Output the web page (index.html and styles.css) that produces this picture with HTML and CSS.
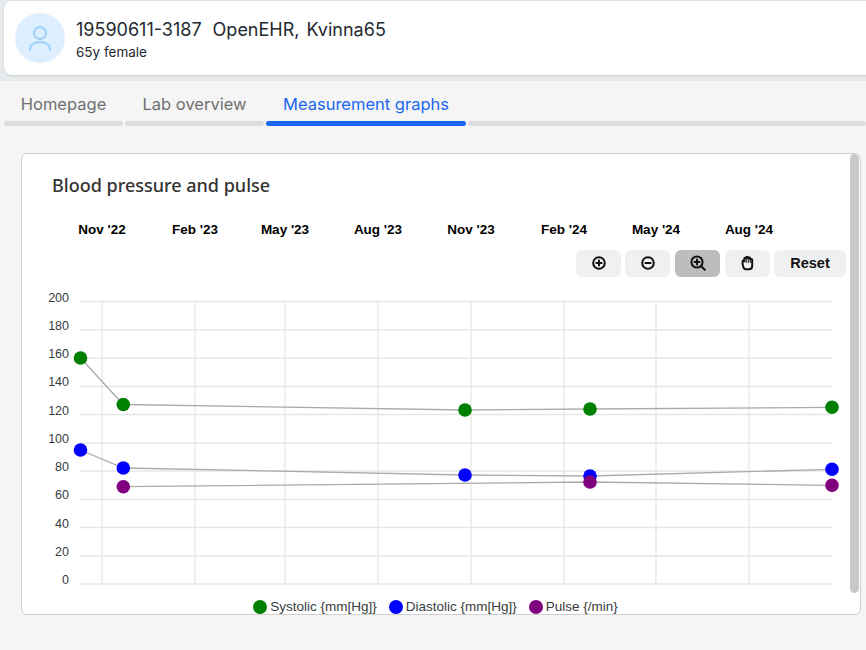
FILE: index.html
```html
<!DOCTYPE html>
<html lang="en">
<head>
    <meta charset="UTF-8">
    <meta name="viewport" content="width=device-width, initial-scale=1.0">
    <link rel="stylesheet" href="styles.css">
    <title>Measurement graphs</title>
</head>
<body>

<div class="patient-bar">
    <header class="patient">
        <div class="avatar">
            <svg width="28" height="28" viewBox="0 0 28 28" fill="none" stroke="#9fd0fa" stroke-width="2" stroke-linecap="round">
                <circle cx="14" cy="9" r="6"/>
                <path d="M4 26c0-5 4-8 10-8s10 3 10 8"/>
            </svg>
        </div>
        <div class="patient-text">
            <div class="patient-name"><span class="patient-id">19590611-3187</span><span>OpenEHR,</span><span>Kvinna65</span></div>
            <div class="patient-info">65y female</div>
        </div>
    </header>
</div>

<nav class="tabs">
    <a class="tab tab-home">Homepage</a>
    <a class="tab tab-lab">Lab overview</a>
    <a class="tab tab-graphs active">Measurement graphs</a>
    <a class="tab tab-rest"></a>
</nav>

<main class="card">
    <h2>Blood pressure and pulse</h2>
    <div class="scrollbar"></div>

    <div class="toolbar">
        <button class="tool">
            <svg width="16" height="16" viewBox="0 0 16 16" fill="none" stroke="#111" stroke-width="2" stroke-linecap="round"><circle cx="8" cy="8" r="5.800"/><path d="M8 5.400v5.200M5.400 8h5.200"/></svg>
        </button>
        <button class="tool">
            <svg width="16" height="16" viewBox="0 0 16 16" fill="none" stroke="#111" stroke-width="2" stroke-linecap="round"><circle cx="8" cy="8" r="5.800"/><path d="M5.400 8h5.200"/></svg>
        </button>
        <button class="tool tool-wide-gap active">
            <svg width="16" height="16" viewBox="0 0 16 16" fill="none" stroke="#111" stroke-width="2" stroke-linecap="round"><circle cx="7" cy="7" r="5.600"/><path d="M7 4.600v4.800M4.600 7h4.800M11.200 11.200l3.600 3.600"/></svg>
        </button>
        <button class="tool tool-wide-gap">
            <svg width="16" height="16" viewBox="0 0 16 16" fill="none" stroke="#111" stroke-linecap="round" stroke-linejoin="round"><path stroke-width="2" d="M2.600 9V6.200c0-.8 1.700-.8 1.700 0V3.400c0-1 1.900-1 1.900 0V2.600c0-1 2-1 2 0v.6c0-1 2-1 2 0v1.400c0-.9 2-.9 2 0v6.200c0 2.300-1.300 3.500-3.300 3.500H6.600c-1.800 0-2.800-.9-3.300-2.200z"/><path d="M6.200 4v3.500M8.200 3v4.500M10.200 3.500v4" stroke-width="1"/></svg>
        </button>
        <button class="tool tool-reset">Reset</button>
    </div>

    <svg class="chart" width="838" height="384" viewBox="22 208 838 384">
        <g class="grid">
            <path d="M80 301.500H832M80 330H832M80 358H832M80 386.500H832M80 414.500H832M80 443H832M80 471H832M80 499.500H832M80 527.500H832M80 556H832M80 584H832"/>
            <path d="M102 301V584M195 301V584M285 301V584M378 301V584M471 301V584M564 301V584M656 301V584M749 301V584"/>
        </g>
        <g class="months">
            <text x="102" y="234">Nov '22</text>
            <text x="195" y="234">Feb '23</text>
            <text x="285" y="234">May '23</text>
            <text x="378" y="234">Aug '23</text>
            <text x="471" y="234">Nov '23</text>
            <text x="564" y="234">Feb '24</text>
            <text x="656" y="234">May '24</text>
            <text x="749" y="234">Aug '24</text>
        </g>
        <g class="values">
            <text x="69" y="302">200</text>
            <text x="69" y="330">180</text>
            <text x="69" y="358">160</text>
            <text x="69" y="386">140</text>
            <text x="69" y="415">120</text>
            <text x="69" y="443">100</text>
            <text x="69" y="471">80</text>
            <text x="69" y="499">60</text>
            <text x="69" y="528">40</text>
            <text x="69" y="556">20</text>
            <text x="69" y="584">0</text>
        </g>
        <g class="lines">
            <polyline points="80.500,358 123.300,404.500 465,410 590,409 832,407.300"/>
            <polyline points="80.500,450 123.300,468 465,475 590,476 832,469.300"/>
            <polyline points="123.300,486.700 590,482 832,485.300"/>
        </g>
        <g fill="#008000">
            <circle cx="80.500" cy="358" r="6.800"/>
            <circle cx="123.300" cy="404.500" r="6.800"/>
            <circle cx="465" cy="410" r="6.800"/>
            <circle cx="590" cy="409" r="6.800"/>
            <circle cx="832" cy="407.300" r="6.800"/>
        </g>
        <g fill="#0000ff">
            <circle cx="80.500" cy="450" r="6.800"/>
            <circle cx="123.300" cy="468" r="6.800"/>
            <circle cx="465" cy="475" r="6.800"/>
            <circle cx="590" cy="476" r="6.800"/>
            <circle cx="832" cy="469.300" r="6.800"/>
        </g>
        <g fill="#800080">
            <circle cx="123.300" cy="486.700" r="6.800"/>
            <circle cx="590" cy="482" r="6.800"/>
            <circle cx="832" cy="485.300" r="6.800"/>
        </g>
    </svg>

    <div class="legend">
        <span class="legend-item"><i class="dot dot-green"></i>Systolic {mm[Hg]}</span>
        <span class="legend-item"><i class="dot dot-blue"></i>Diastolic {mm[Hg]}</span>
        <span class="legend-item"><i class="dot dot-purple"></i>Pulse {/min}</span>
    </div>
</main>

</body>
</html>
```

FILE: styles.css
```css
* {
    box-sizing: border-box;
}

body {
    margin: 0;
    height: 650px;
    overflow: hidden;
    background-color: #f5f5f5;
    font-family: 'Inter', sans-serif;
    color: #24292f;
}

.patient-bar {
    height: 81px;
    padding-left: 4px;
    overflow: hidden;
    background-color: #e6eaed;
}

.patient {
    display: flex;
    align-items: center;
    gap: 11px;
    height: 75px;
    margin-right: -10px;
    padding-left: 11px;
    background-color: #fff;
    border-top: 1px solid #dedede;
    border-radius: 8px;
    box-shadow: 0 1px 2px rgba(0, 0, 0, 0.12);
}

.avatar {
    display: flex;
    align-items: center;
    justify-content: center;
    width: 50px;
    height: 50px;
    border-radius: 50%;
    background-color: #ddeeff;
}

.patient-text {
    padding-top: 3px;
}

.patient-name {
    display: flex;
    gap: 7px;
    font-size: 18px;
    line-height: 24px;
}

.patient-id {
    margin-right: 4px;
}

.patient-info {
    font-size: 13.500px;
    line-height: 20px;
}

.tabs {
    display: flex;
    gap: 2px;
    height: 45px;
    margin-left: 4px;
}

.tab {
    display: flex;
    flex-direction: column;
    height: 45px;
    padding-top: 11px;
    text-align: center;
    font-size: 16.500px;
    line-height: 24px;
    color: #707070;
}

.tab::after {
    content: "";
    display: block;
    height: 5px;
    margin-top: auto;
    background-color: #dcdcdc;
    border-radius: 3px;
}

.tab-home {
    width: 119px;
}

.tab-lab {
    width: 139px;
}

.tab-graphs {
    width: 200px;
}

.tab-rest {
    flex: 1;
}

.tab.active {
    color: #1a66f0;
}

.tab.active::after {
    background-color: #1a66f0;
}

.card {
    position: relative;
    width: 840px;
    height: 462px;
    margin: 27px 0 0 21px;
    background-color: #fff;
    border: 1px solid #cfcfcf;
    border-radius: 6px;
}

h2 {
    margin: 0;
    height: 54px;
    padding: 19px 0 0 30px;
    font-family: 'Noto Sans', sans-serif;
    font-size: 18px;
    font-weight: 500;
    line-height: 24px;
    color: #333;
}

.scrollbar {
    position: absolute;
    top: 0;
    right: 1px;
    width: 9px;
    height: 439px;
    background-color: #c9c9c9;
    border-radius: 5px;
}

.toolbar {
    position: absolute;
    top: 96px;
    right: 14px;
    display: flex;
    gap: 4px;
}

.tool {
    display: flex;
    align-items: center;
    justify-content: center;
    width: 45px;
    height: 27px;
    padding: 0 0 1px;
    border: none;
    border-radius: 6px;
    background-color: #eff0f2;
    font-family: 'Liberation Sans', sans-serif;
    font-size: 14.500px;
    font-weight: bold;
    color: #111;
}

.tool-wide-gap {
    margin-left: 1px;
}

.tool.active {
    background-color: #bdbdbd;
}

.tool-reset {
    width: 72px;
}

.chart {
    display: block;
}

.grid path {
    fill: none;
    stroke: #e6e6e6;
    stroke-width: 1.300;
}

.months text {
    font-family: 'Liberation Sans', sans-serif;
    font-size: 13.500px;
    font-weight: bold;
    text-anchor: middle;
    fill: #000;
}

.values text {
    font-family: 'Liberation Sans', sans-serif;
    font-size: 12.500px;
    text-anchor: end;
    fill: #373d3f;
}

.lines polyline {
    fill: none;
    stroke: #aaa;
    stroke-width: 1.300;
}

.legend {
    display: flex;
    justify-content: center;
    gap: 12px;
    margin-top: 5px;
    padding-right: 11px;
    font-family: 'Liberation Sans', sans-serif;
    font-size: 13.500px;
    line-height: 20px;
    color: #373d3f;
}

.legend-item {
    display: flex;
    align-items: center;
    gap: 3px;
}

.dot {
    width: 14px;
    height: 14px;
    border-radius: 50%;
}

.dot-green {
    background-color: #008000;
}

.dot-blue {
    background-color: #0000ff;
}

.dot-purple {
    background-color: #800080;
}
```
